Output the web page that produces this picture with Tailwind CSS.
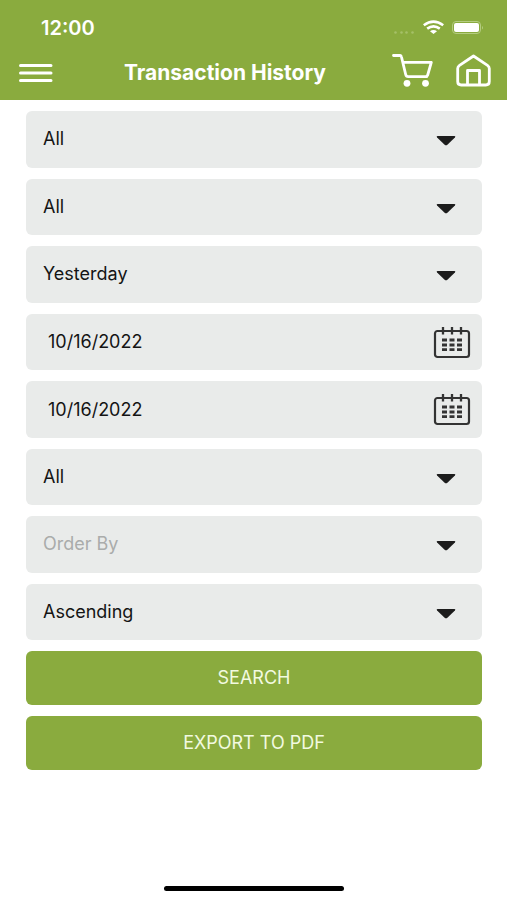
<!DOCTYPE html>
<html lang="en">
<head>
<meta charset="utf-8">
<meta name="viewport" content="width=device-width, initial-scale=1">
<title>Transaction History</title>
<script src="https://cdn.jsdelivr.net/npm/@tailwindcss/browser@4"></script>
</head>
<body class="flex min-h-screen flex-col bg-white font-['Inter','Liberation_Sans',sans-serif] text-[#141414]">
<header class="bg-[#8aab3e] text-white">
  <div class="flex h-[45px] items-center justify-between pt-[10px] pr-6 pl-[41px]">
    <span class="text-xl font-semibold">12:00</span>
    <svg class="h-[18px] w-[90px]" viewBox="0 0 90 18" fill="none" aria-hidden="true">
      <g fill="#a5c068"><circle cx="2.500" cy="13.500" r="1.300"/><circle cx="8.500" cy="13.500" r="1.300"/><circle cx="13.500" cy="13.500" r="1.300"/><circle cx="19.500" cy="13.500" r="1.300"/></g>
      <path d="M30.800 6.300Q40.500-1 50.200 6.300M34.200 9.600Q40.500 5 46.800 9.600" stroke="#fff" stroke-width="2.600"/>
      <path d="M37 12.200Q40.500 9.700 44 12.200L40.500 15Z" fill="#fff"/>
      <rect x="59.500" y="2.500" width="28" height="12" rx="3.500" stroke="#b4cc80"/>
      <rect x="61" y="4" width="25" height="9" rx="2" fill="#fff"/>
      <path d="M89 7v3.500q1-.4 1-1.700t-1-1.800" fill="#b4cc80"/>
    </svg>
  </div>
  <div class="flex h-[55px] items-center pr-4 pl-[19px]">
    <button type="button" aria-label="Menu">
      <svg class="h-[20px] w-[34px]" viewBox="0 0 34 20" stroke="#fff" stroke-width="3" stroke-linecap="round"><path d="M1.500 2.500h30.500M1.500 10h30.500M1.500 17.500h30.500"/></svg>
    </button>
    <h1 class="flex-1 pl-[5px] text-center text-[21px] font-bold whitespace-nowrap">Transaction History</h1>
    <div class="flex items-center gap-[23px] pb-[5px]">
      <button type="button" aria-label="Cart">
        <svg class="h-[34px] w-[41px]" viewBox="0 0 41 34" fill="none" stroke="#fff" stroke-width="2.800" stroke-linejoin="round" stroke-linecap="round"><path d="M1.500 2.500H8.300Q9.200 2.500 9.500 4L13.700 21.500Q14.200 23.700 16.200 23.700H33.500Q35.200 23.700 35.700 22L39.300 9.300H10.800"/><circle cx="15" cy="30.300" r="3.400" fill="#fff" stroke="none"/><circle cx="33.500" cy="30.300" r="3.400" fill="#fff" stroke="none"/></svg>
      </button>
      <a href="#" aria-label="Home">
        <svg class="h-[34px] w-[35px]" viewBox="0 0 35 34" fill="none" stroke="#fff" stroke-width="2.800" stroke-linejoin="round"><path d="M17.500 3L31.500 12.300Q33.300 13.500 33.300 15.500V28.500Q33.300 32 29.800 32H5.200Q1.700 32 1.700 28.500V15.500Q1.700 13.500 3.500 12.300Z"/><path d="M11.500 32V17.500H23.500V32"/></svg>
      </a>
    </div>
  </div>
</header>

<main class="flex flex-1 flex-col pt-[11px] pr-[25px] pl-[26px]">
  <form class="flex flex-col gap-[11px] text-lg">
    <div class="grid h-[529px] grid-rows-8 gap-[11px]">
      <label class="relative block"><select aria-label="Account" class="size-full appearance-none rounded-md bg-[#e9ebea] pr-14 pl-[17px]"><option>All</option></select><svg class="pointer-events-none absolute top-[25px] right-[26px] h-[10px] w-[20px]" viewBox="0 0 20 10" fill="#1c1c1c"><path d="M1.500 0H18.500Q20 .3 18.900 1.500L11.400 8.800Q10 9.900 8.600 8.800L1.100 1.500Q0 .3 1.500 0Z"/></svg></label>
      <label class="relative block"><select aria-label="Type" class="size-full appearance-none rounded-md bg-[#e9ebea] pr-14 pl-[17px]"><option>All</option></select><svg class="pointer-events-none absolute top-[25px] right-[26px] h-[10px] w-[20px]" viewBox="0 0 20 10" fill="#1c1c1c"><path d="M1.500 0H18.500Q20 .3 18.900 1.500L11.400 8.800Q10 9.900 8.600 8.800L1.100 1.500Q0 .3 1.500 0Z"/></svg></label>
      <label class="relative block"><select aria-label="Period" class="size-full appearance-none rounded-md bg-[#e9ebea] pr-14 pl-[17px]"><option>Yesterday</option></select><svg class="pointer-events-none absolute top-[25px] right-[26px] h-[10px] w-[20px]" viewBox="0 0 20 10" fill="#1c1c1c"><path d="M1.500 0H18.500Q20 .3 18.900 1.500L11.400 8.800Q10 9.900 8.600 8.800L1.100 1.500Q0 .3 1.500 0Z"/></svg></label>
      <label class="relative block"><input aria-label="From date" type="text" value="10/16/2022" class="size-full rounded-md bg-[#e9ebea] pr-14 pl-[22px]"><svg class="pointer-events-none absolute top-[13px] right-[11px] h-[32px] w-[38px]" viewBox="0 0 38 32" fill="none" stroke="#333" stroke-width="2.200"><rect x="2" y="4" width="34" height="26" rx="2.500"/><path d="M10 0V7.500M19 0V7.500M28 0V7.500" stroke-width="2.300"/><path d="M9 13h5M16.500 13h5M24 13h5M9 18h5M16.500 18h5M24 18h5M9 22.700h5M16.500 22.700h5M24 22.700h5" stroke-width="2.800"/></svg></label>
      <label class="relative block"><input aria-label="To date" type="text" value="10/16/2022" class="size-full rounded-md bg-[#e9ebea] pr-14 pl-[22px]"><svg class="pointer-events-none absolute top-[13px] right-[11px] h-[32px] w-[38px]" viewBox="0 0 38 32" fill="none" stroke="#333" stroke-width="2.200"><rect x="2" y="4" width="34" height="26" rx="2.500"/><path d="M10 0V7.500M19 0V7.500M28 0V7.500" stroke-width="2.300"/><path d="M9 13h5M16.500 13h5M24 13h5M9 18h5M16.500 18h5M24 18h5M9 22.700h5M16.500 22.700h5M24 22.700h5" stroke-width="2.800"/></svg></label>
      <label class="relative block"><select aria-label="Status" class="size-full appearance-none rounded-md bg-[#e9ebea] pr-14 pl-[17px]"><option>All</option></select><svg class="pointer-events-none absolute top-[25px] right-[26px] h-[10px] w-[20px]" viewBox="0 0 20 10" fill="#1c1c1c"><path d="M1.500 0H18.500Q20 .3 18.900 1.500L11.400 8.800Q10 9.900 8.600 8.800L1.100 1.500Q0 .3 1.500 0Z"/></svg></label>
      <label class="relative block"><select aria-label="Order By" class="size-full appearance-none rounded-md bg-[#e9ebea] pr-14 pl-[17px] text-[#aaacab]"><option>Order By</option></select><svg class="pointer-events-none absolute top-[25px] right-[26px] h-[10px] w-[20px]" viewBox="0 0 20 10" fill="#1c1c1c"><path d="M1.500 0H18.500Q20 .3 18.900 1.500L11.400 8.800Q10 9.900 8.600 8.800L1.100 1.500Q0 .3 1.500 0Z"/></svg></label>
      <label class="relative block"><select aria-label="Direction" class="size-full appearance-none rounded-md bg-[#e9ebea] pr-14 pl-[17px]"><option>Ascending</option></select><svg class="pointer-events-none absolute top-[25px] right-[26px] h-[10px] w-[20px]" viewBox="0 0 20 10" fill="#1c1c1c"><path d="M1.500 0H18.500Q20 .3 18.900 1.500L11.400 8.800Q10 9.900 8.600 8.800L1.100 1.500Q0 .3 1.500 0Z"/></svg></label>
    </div>
    <button type="button" class="h-[54px] rounded-md bg-[#8aab3e] text-[#f2fae0]">SEARCH</button>
    <button type="button" class="h-[54px] rounded-md bg-[#8aab3e] text-[#f2fae0]">EXPORT TO PDF</button>
  </form>
</main>
<footer class="flex justify-center pb-[9px]"><div class="h-[5px] w-[180px] rounded-full bg-black"></div></footer>
</body>
</html>
